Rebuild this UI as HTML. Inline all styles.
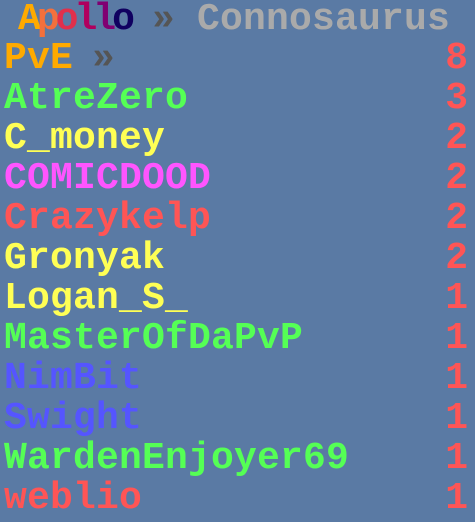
<!DOCTYPE html>
<html><head><style>
body{margin:0;width:475px;height:522px;background:#5a7aa4;overflow:hidden;font-family:"Liberation Mono",monospace;font-weight:bold;font-size:38px;}
.r{position:absolute;left:4px;width:464px;height:40px;line-height:40px;letter-spacing:0.2px;white-space:pre;}
.n{position:absolute;right:0;top:0;color:#FF5555;letter-spacing:0}
.a{position:absolute;top:0}
</style></head><body>
<div class="r" style="top:0;left:0;width:475px"><span class="a" style="left:18px;letter-spacing:-4px"><span style="color:#FFAA00">A</span><span style="color:#F4703C">p</span><span style="color:#E0304C">o</span><span style="color:#B0005E">l</span><span style="color:#800072">l</span><span style="color:#100060">o</span></span><span class="a" style="left:152px;color:#555">»</span><span class="a" style="left:197px;color:#AAAAAA">Connosaurus</span></div>
<div class="r" style="top:39px"><span style="color:#FFAA00">PvE</span><span class="a" style="left:88px;color:#555">»</span><span class="n">8</span></div>
<div class="r" style="top:79px;color:#55FF55">AtreZero<span class="n">3</span></div>
<div class="r" style="top:119px;color:#FFFF55">C_money<span class="n">2</span></div>
<div class="r" style="top:159px;color:#FF55FF">COMICDOOD<span class="n">2</span></div>
<div class="r" style="top:199px;color:#FF5555">Crazykelp<span class="n">2</span></div>
<div class="r" style="top:239px;color:#FFFF55">Gronyak<span class="n">2</span></div>
<div class="r" style="top:279px;color:#FFFF55">Logan_S_<span class="n">1</span></div>
<div class="r" style="top:319px;color:#55FF55">MasterOfDaPvP<span class="n">1</span></div>
<div class="r" style="top:359px;color:#5555FF">NimBit<span class="n">1</span></div>
<div class="r" style="top:399px;color:#5555FF">Swight<span class="n">1</span></div>
<div class="r" style="top:439px;color:#55FF55">WardenEnjoyer69<span class="n">1</span></div>
<div class="r" style="top:479px;color:#FF5555">weblio<span class="n">1</span></div>
</body></html>
